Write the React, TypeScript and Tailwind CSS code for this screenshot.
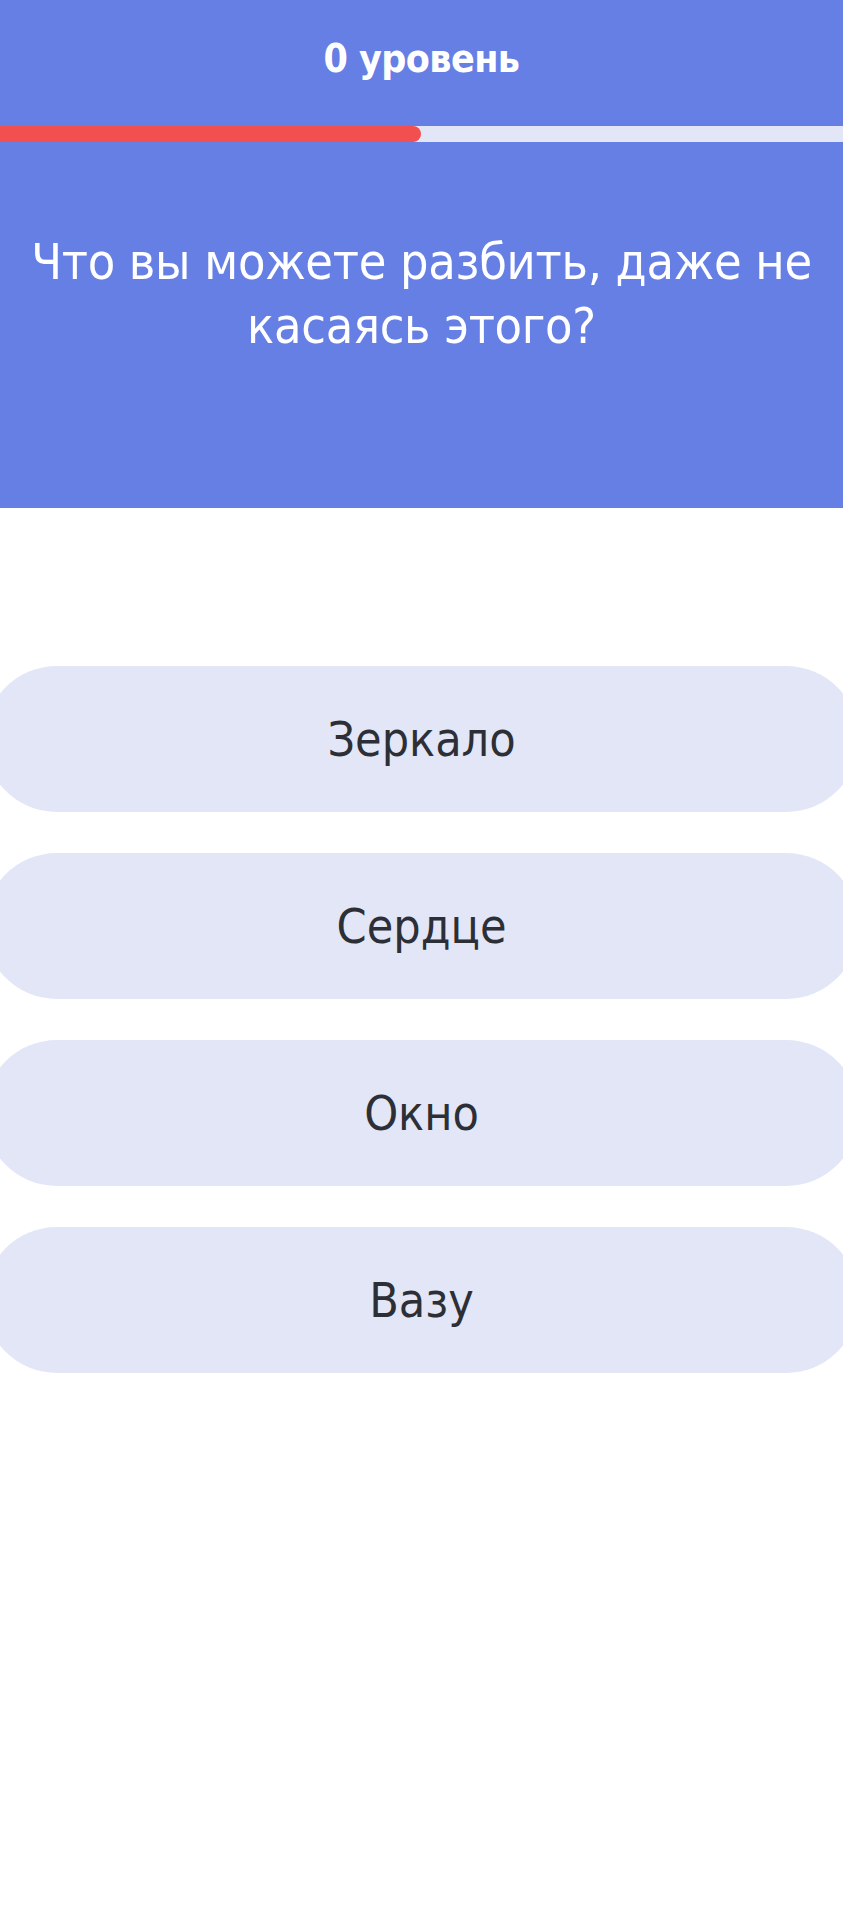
import { useState } from "react";

const answers = ["Зеркало", "Сердце", "Окно", "Вазу"];

export default function App() {
  const [picked, setPicked] = useState<number | null>(null);

  return (
    <div
      className="min-h-screen bg-white overflow-hidden"
      style={{ fontFamily: '"DejaVu Sans Condensed", "DejaVu Sans", sans-serif' }}
    >
      {/* Header: level, progress, question */}
      <header className="bg-[#667fe5] h-[508px] flex flex-col">
        <h1 className="pt-[35px] text-center text-[39px] leading-[48px] font-bold tracking-[-0.6px] text-white">
          0 уровень
        </h1>
        <div className="mt-[43px] h-[16px] bg-[#e2e6f7]">
          <div className="h-full w-[421px] bg-[#f25050] rounded-r-full" />
        </div>
        <p className="mt-[88px] px-3 text-center text-[50px] leading-[64px] font-medium tracking-[-0.3px] text-white">
          Что вы можете разбить, даже не касаясь этого?
        </p>
      </header>

      {/* Answer options */}
      <div className="mt-[158px] -mx-4 flex flex-col gap-[41px]">
        {answers.map((a, i) => (
          <button
            key={a}
            onClick={() => setPicked(i)}
            className={`h-[146px] rounded-full flex items-center justify-center text-[48px] text-[#2d2f36] ${
              picked === i ? "bg-[#cfd5f3]" : "bg-[#e2e6f7]"
            }`}
          >
            {a}
          </button>
        ))}
      </div>
    </div>
  );
}
